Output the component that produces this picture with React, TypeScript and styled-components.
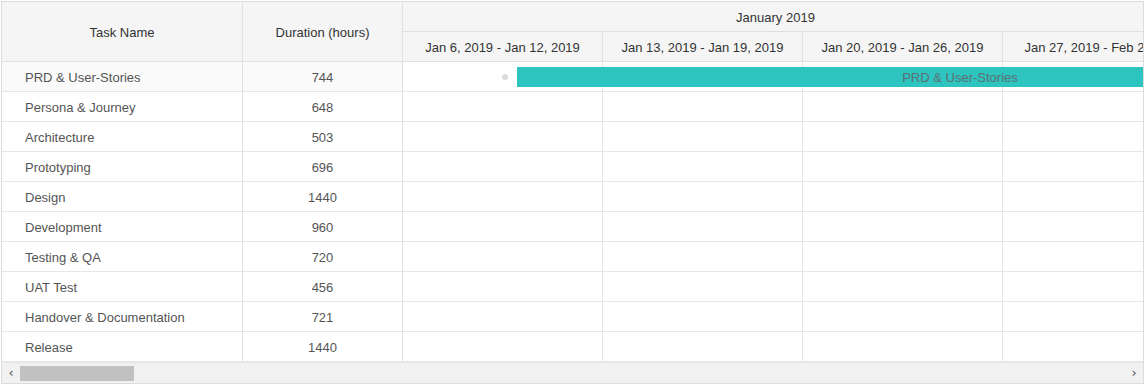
import React from 'react';
import styled, { createGlobalStyle } from 'styled-components';

const GlobalStyle = createGlobalStyle`
  body {
    margin: 0;
    background: #fff;
    font-family: 'Liberation Sans', Arial, sans-serif;
    font-size: 13px;
    color: #555;
  }
`;

const tasks = [
  { name: 'PRD & User-Stories', hours: 744 },
  { name: 'Persona & Journey', hours: 648 },
  { name: 'Architecture', hours: 503 },
  { name: 'Prototyping', hours: 696 },
  { name: 'Design', hours: 1440 },
  { name: 'Development', hours: 960 },
  { name: 'Testing & QA', hours: 720 },
  { name: 'UAT Test', hours: 456 },
  { name: 'Handover & Documentation', hours: 721 },
  { name: 'Release', hours: 1440 },
];

const weeks = [
  'Jan 6, 2019 - Jan 12, 2019',
  'Jan 13, 2019 - Jan 19, 2019',
  'Jan 20, 2019 - Jan 26, 2019',
  'Jan 27, 2019 - Feb 2, 2019',
];

const App: React.FC = () => {
  return (
    <>
      <GlobalStyle />
      <StyleFrame>
        <StyleBody>
          <StyleGrid>
            <StyleHeadCell>Task Name</StyleHeadCell>
            <StyleHeadCell last>Duration (hours)</StyleHeadCell>
            {tasks.map((t, i) => (
              <React.Fragment key={t.name}>
                <StyleCell selected={i === 0}>{t.name}</StyleCell>
                <StyleCell selected={i === 0} center last>
                  {t.hours}
                </StyleCell>
              </React.Fragment>
            ))}
          </StyleGrid>
          <StyleTimeline>
            <StyleMonth>January 2019</StyleMonth>
            <StyleWeekRow>
              {weeks.map((w) => (
                <StyleWeek key={w}>{w}</StyleWeek>
              ))}
            </StyleWeekRow>
            {tasks.map((t, i) => (
              <StyleTrack key={t.name}>
                {weeks.map((w) => (
                  <StyleSlot key={w} />
                ))}
                {i === 0 && (
                  <>
                    <StyleDot />
                    <StyleBar>{t.name}</StyleBar>
                  </>
                )}
              </StyleTrack>
            ))}
          </StyleTimeline>
        </StyleBody>
        <StyleScrollbar>
          <StyleArrow>‹</StyleArrow>
          <StyleTrackArea>
            <StyleThumb />
          </StyleTrackArea>
          <StyleArrow>›</StyleArrow>
        </StyleScrollbar>
      </StyleFrame>
    </>
  );
};

const StyleFrame = styled.div`
  margin: 1px;
  width: 1143px;
  border: 1px solid #dcdcdc;
  box-sizing: border-box;
  overflow: hidden;
`;

const StyleBody = styled.div`
  display: flex;
`;

const StyleGrid = styled.div`
  display: grid;
  grid-template-columns: 241px 159px;
  grid-auto-rows: 30px;
  flex: none;
  border-right: 1px solid #e0e0e0;
`;

const StyleHeadCell = styled.div<{ last?: boolean }>`
  grid-row: span 2;
  display: flex;
  align-items: center;
  justify-content: center;
  padding-top: 1px;
  background: #f5f5f5;
  color: #333;
  border-bottom: 1px solid #e0e0e0;
  border-right: ${(p) => (p.last ? 'none' : '1px solid #e0e0e0')};
`;

const StyleCell = styled.div<{ center?: boolean; last?: boolean; selected?: boolean }>`
  display: flex;
  align-items: center;
  justify-content: ${(p) => (p.center ? 'center' : 'flex-start')};
  padding-left: ${(p) => (p.center ? '0' : '23px')};
  padding-top: 2px;
  background: ${(p) => (p.selected ? '#fafafa' : '#fff')};
  border-bottom: 1px solid #e6e6e6;
  border-right: ${(p) => (p.last ? 'none' : '1px solid #e0e0e0')};
  white-space: nowrap;
`;

const StyleTimeline = styled.div`
  flex: 1;
  min-width: 0;
  overflow: hidden;
`;

const StyleMonth = styled.div`
  height: 30px;
  width: 745px;
  display: flex;
  align-items: center;
  justify-content: center;
  padding-top: 1px;
  background: #f5f5f5;
  color: #333;
  border-bottom: 1px solid #e0e0e0;
  box-sizing: border-box;
`;

const StyleWeekRow = styled.div`
  display: flex;
  height: 30px;
  background: #f5f5f5;
  border-bottom: 1px solid #e0e0e0;
  box-sizing: border-box;
  width: max-content;
  min-width: 100%;
`;

const StyleWeek = styled.div`
  flex: none;
  box-sizing: border-box;
  width: 200px;
  display: flex;
  align-items: center;
  justify-content: center;
  padding-top: 2px;
  color: #333;
  border-right: 1px solid #e0e0e0;
  white-space: nowrap;
  overflow: hidden;
`;

const StyleTrack = styled.div`
  position: relative;
  display: flex;
  height: 30px;
  border-bottom: 1px solid #e6e6e6;
  box-sizing: border-box;
  width: max-content;
`;

const StyleSlot = styled.div`
  flex: none;
  box-sizing: border-box;
  width: 200px;
  border-right: 1px solid #e6e6e6;
`;

const StyleDot = styled.span`
  position: absolute;
  left: 99px;
  top: 12px;
  width: 6px;
  height: 6px;
  border-radius: 50%;
  background: #dcdcdc;
`;

const StyleBar = styled.div`
  position: absolute;
  left: 114px;
  top: 5px;
  height: 20px;
  width: 886px;
  padding-top: 1px;
  box-sizing: border-box;
  background: #2ec4bf;
  color: #5c6f72;
  display: flex;
  align-items: center;
  justify-content: center;
  white-space: nowrap;
`;

const StyleScrollbar = styled.div`
  display: flex;
  align-items: center;
  height: 20px;
  background: #f1f1f1;
  border-top: 1px solid #e6e6e6;
`;

const StyleArrow = styled.span`
  flex: none;
  width: 18px;
  text-align: center;
  font-family: 'DejaVu Sans', sans-serif;
  font-size: 13px;
  line-height: 20px;
  color: #555;
`;

const StyleTrackArea = styled.div`
  flex: 1;
  height: 100%;
  display: flex;
  align-items: center;
`;

const StyleThumb = styled.div`
  width: 114px;
  height: 15px;
  background: #c1c1c1;
`;

export default App;
